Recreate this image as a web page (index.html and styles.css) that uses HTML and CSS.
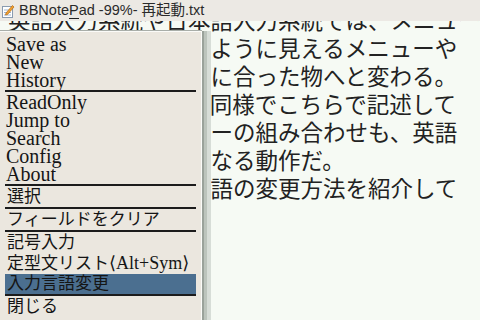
FILE: index.html
```html
<!DOCTYPE html>
<html lang="ja">
<head>
    <meta charset="UTF-8">
    <meta name="viewport" content="width=device-width, initial-scale=1.0">
    <title>BBNotePad</title>
    <link rel="stylesheet" href="styles.css">
</head>
<body>
    <div class="screen">
        <div class="titlebar">
            <svg class="app-icon" width="14" height="14" viewBox="0 0 14 14">
                <rect x="1.5" y="2.5" width="10" height="11" fill="#fff" stroke="#8a9bb0"/>
                <line x1="3" y1="6" x2="10" y2="6" stroke="#9fb4d0"/>
                <line x1="3" y1="8.5" x2="10" y2="8.5" stroke="#9fb4d0"/>
                <line x1="3" y1="11" x2="10" y2="11" stroke="#9fb4d0"/>
                <path d="M5 9 L11.5 1.5 L13 3 L6.5 10.5 L4.5 11 Z" fill="#f0a030" stroke="#b86a10" stroke-width="0.7"/>
            </svg>
            <span class="title">BBNote<span class="caret">P</span>ad -99%- 再起動.txt</span>
        </div>

        <div class="editor">
            <div class="lines">
                <div class="line">英語入力系統や日本語入力系統では、メニュー</div>
                <div class="line">英語の入力ではこのように見えるメニューや</div>
                <div class="line">ボタンも各入力言語に合った物へと変わる。</div>
                <div class="line">ショートカットも、同様でこちらで記述して</div>
                <div class="line">いる各メニューとキーの組み合わせも、英語</div>
                <div class="line">入力の時とは全く異なる動作だ。</div>
                <div class="line">ここでは次に入力言語の変更方法を紹介して</div>
                <div class="line">いこう。</div>
            </div>
        </div>

        <div class="menu">
            <div class="item">Save as</div>
            <div class="item">New</div>
            <div class="item">History</div>
            <div class="sep"></div>
            <div class="item">ReadOnly</div>
            <div class="item">Jump to</div>
            <div class="item">Search</div>
            <div class="item">Config</div>
            <div class="item">About</div>
            <div class="sep"></div>
            <div class="item ja">選択</div>
            <div class="sep"></div>
            <div class="item ja">フィールドをクリア</div>
            <div class="sep"></div>
            <div class="item ja">記号入力</div>
            <div class="item ja">定型文リスト<span class="key"><span class="bracket">⟨</span>Alt+Sym<span class="bracket">⟩</span></span></div>
            <div class="item ja selected">入力言語変更</div>
            <div class="sep"></div>
            <div class="item ja">閉じる</div>
        </div>
    </div>
</body>
</html>
```

FILE: styles.css
```css
body {
    margin: 0;
    background-color: #f6faf4;
}

.screen {
    position: relative;
    width: 480px;
    height: 320px;
    overflow: hidden;
    background-color: #f6faf4;
}

.titlebar {
    display: flex;
    align-items: center;
    gap: 4px;
    height: 21px;
    padding-left: 1px;
    background-color: #ece9e4;
    position: relative;
    z-index: 1;
}

.app-icon {
    flex: none;
}

.title {
    font-family: "Liberation Sans", "Noto Sans CJK JP", sans-serif;
    font-size: 14.5px;
    line-height: 21px;
    color: #2a2a2a;
    white-space: nowrap;
}

.title .caret {
    border-bottom: 1px solid #222;
}

.editor {
    height: 299px;
    overflow: hidden;
}

.editor .lines {
    margin-top: -16px;
    padding-left: 8px;
    font-family: "Noto Sans CJK JP", sans-serif;
    font-size: 22.5px;
    line-height: 28px;
    color: #222;
}

.editor .line {
    white-space: nowrap;
}

.menu {
    position: absolute;
    left: 0;
    top: 31px;
    bottom: 0;
    width: 201px;
    padding-top: 3px;
    background-color: #ebe7df;
    border-top: 1px solid #fbfbf8;
    border-right: 1px solid #fbfbf8;
    box-shadow: 0 -1px 0 #a9aea9, 2px 0 0 #9aa29a, 5px 0 0 #bcc4bc, 9px 0 0 #d7ddd7;
    font-family: "Liberation Serif", "Noto Sans CJK JP", serif;
    font-size: 20px;
    color: #151515;
}

.menu .item {
    margin: 0 5px;
    padding-left: 1px;
    line-height: 18.2px;
    white-space: nowrap;
}

.menu .item.ja {
    font-size: 17px;
    line-height: 20px;
    padding-left: 2px;
}

.menu .item.selected {
    background-color: #4b6f90;
}

.menu .key {
    font-size: 18px;
}

.menu .bracket {
    font-family: "DejaVu Serif", serif;
    font-size: 18px;
}

.menu .sep {
    height: 2px;
    margin: 0 5px 1px 5px;
    background-color: #1c1c1c;
}
```
